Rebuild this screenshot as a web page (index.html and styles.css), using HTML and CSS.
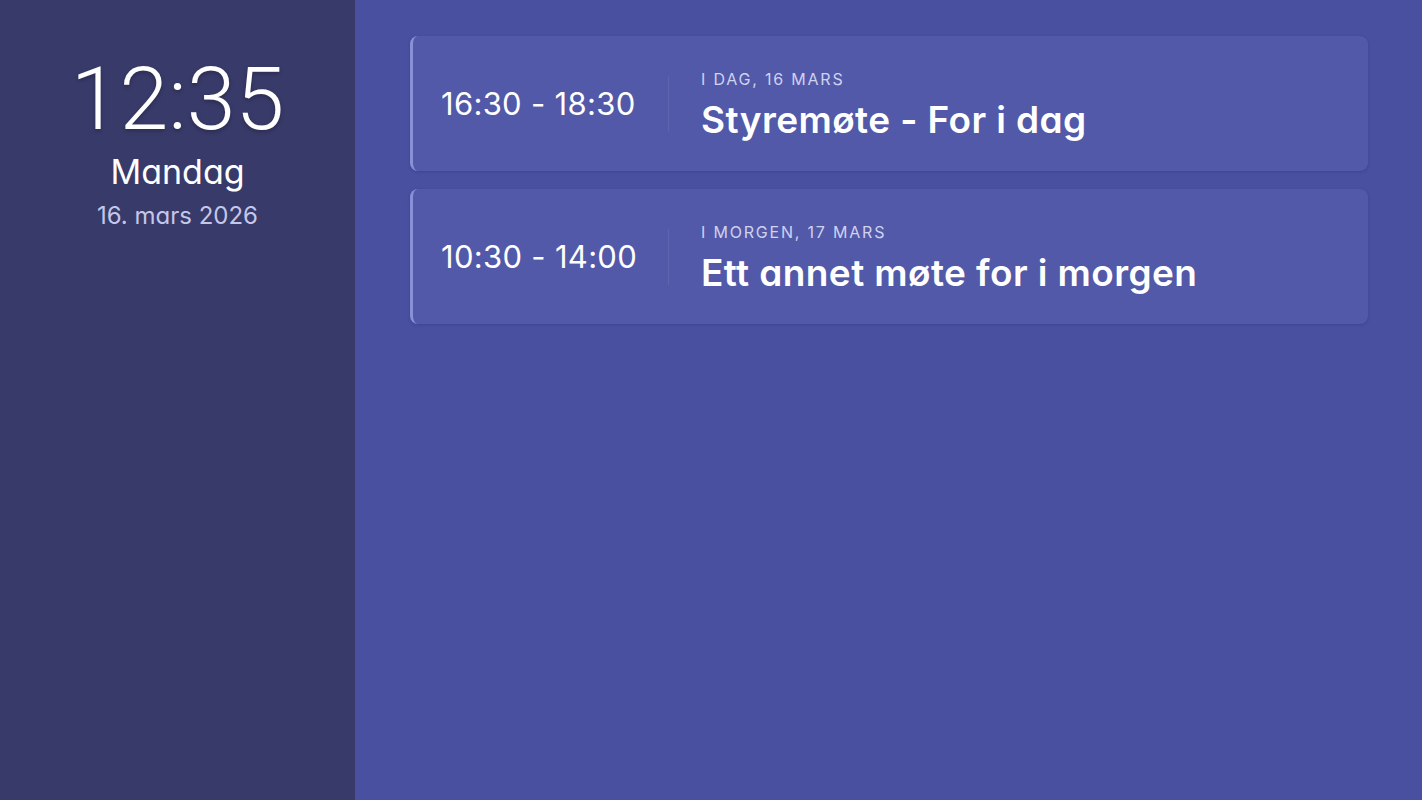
FILE: index.html
```html
<!DOCTYPE html>
<html lang="no">
<head>
<meta charset="utf-8">
<title>Møteromskalender</title>
<link rel="stylesheet" href="styles.css">
</head>
<body>
<div class="screen">
  <aside class="sidebar">
    <div class="clock">12:35</div>
    <div class="weekday">Mandag</div>
    <div class="date">16. mars 2026</div>
  </aside>
  <main class="agenda">
    <div class="event">
      <div class="event-time">16:30 - 18:30</div>
      <div class="event-body">
        <div class="event-day">I DAG, 16 MARS</div>
        <div class="event-title">Styremøte - For i dag</div>
      </div>
    </div>
    <div class="event">
      <div class="event-time">10:30 - 14:00</div>
      <div class="event-body">
        <div class="event-day">I MORGEN, 17 MARS</div>
        <div class="event-title">Ett annet møte for i morgen</div>
      </div>
    </div>
  </main>
</div>
</body>
</html>
```

FILE: styles.css
```css
html, body {
  margin: 0;
  padding: 0;
  height: 100%;
}

body {
  font-family: Inter, "Noto Sans", sans-serif;
  font-feature-settings: "cv11";
  color: #ffffff;
  background: #4950a0;
}

.screen {
  display: flex;
  height: 100vh;
}

/* left column with clock and date */
.sidebar {
  width: 355px;
  flex: none;
  background: #383a69;
  display: flex;
  flex-direction: column;
  align-items: center;
  padding-top: 55px;
  box-sizing: border-box;
}

.clock {
  font-family: Roboto, Inter, sans-serif;
  font-weight: 300;
  font-size: 88px;
  line-height: 1;
  text-shadow: 0 2px 4px rgba(0, 0, 0, 0.25);
}

.weekday {
  font-size: 34px;
  font-weight: 400;
  line-height: 1;
  margin-top: 12px;
}

.date {
  font-size: 24px;
  font-weight: 400;
  line-height: 1;
  margin-top: 15px;
  color: #c4c7ea;
}

/* right column with the event list */
.agenda {
  flex: 1;
  display: flex;
  flex-direction: column;
  gap: 18px;
  padding: 36px 54px 0 55px;
}

.event {
  display: flex;
  align-items: center;
  height: 135px;
  box-sizing: border-box;
  background: #5259a8;
  border-left: 3px solid #8a90d8;
  border-radius: 8px;
  box-shadow: 0 1px 3px rgba(30, 32, 90, 0.25);
}

.event-time {
  width: 227px;
  flex: none;
  padding-left: 28px;
  font-size: 31px;
  font-weight: 400;
  letter-spacing: 0.3px;
  border-right: 1px solid rgba(255, 255, 255, 0.07);
  line-height: 56px;
}

.event-body {
  padding-left: 32px;
  padding-top: 4px;
}

.event-day {
  font-size: 16px;
  letter-spacing: 1.8px;
  color: #cfd2f0;
  line-height: 20px;
}

.event-title {
  font-size: 37px;
  font-weight: 600;
  line-height: 44px;
  margin-top: 9px;
  letter-spacing: 0.4px;
}
```
